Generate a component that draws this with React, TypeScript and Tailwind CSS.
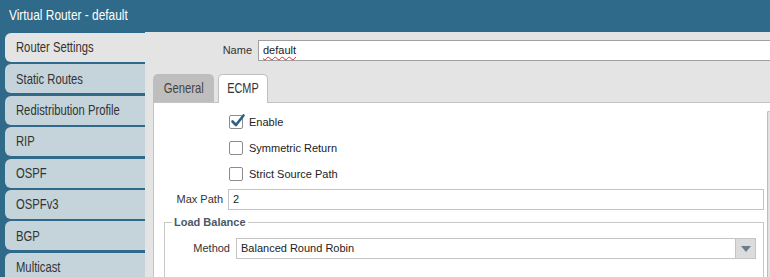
import React from "react";

const TEAL = "bg-[#2f6a8a]";

const sideTabs = [
  "Router Settings",
  "Static Routes",
  "Redistribution Profile",
  "RIP",
  "OSPF",
  "OSPFv3",
  "BGP",
  "Multicast",
];

const form = { fontFamily: '"Liberation Sans", Tahoma, Arial, sans-serif' };

// Arial Narrow is not installed, so the condensed UI font is squeezed
function Narrow({
  children,
  center,
  tight,
}: {
  children: React.ReactNode;
  center?: boolean;
  tight?: boolean;
}) {
  return (
    <span
      className={`inline-block whitespace-nowrap ${tight ? "scale-x-[0.75]" : "scale-x-[0.82]"} ${
        center ? "origin-center" : "origin-left"
      }`}
    >
      {children}
    </span>
  );
}

function Checkbox({ checked, label }: { checked?: boolean; label: string }) {
  return (
    <div className="flex items-center h-[26px] pl-[75px]">
      <div className="relative w-[14px] h-[14px] bg-white border border-[#8c8c8c] rounded-[2px] shrink-0">
        {checked && (
          <svg
            className="absolute -top-[3px] left-[0px]"
            width="16"
            height="16"
            viewBox="0 0 16 16"
          >
            <path
              d="M2.5 8.5 L6 12 L13.5 2.5"
              fill="none"
              stroke="#2e5f86"
              strokeWidth="2.6"
              strokeLinecap="round"
              strokeLinejoin="round"
            />
          </svg>
        )}
      </div>
      <span className="ml-[6px] text-[11px] text-[#222]">{label}</span>
    </div>
  );
}

export default function App() {
  return (
    <div className="w-[770px] h-[277px] overflow-hidden bg-[#e4e4e4] flex flex-col" style={form}>
      {/* Title bar */}
      <div className={`h-[32px] ${TEAL} flex items-center pl-[9px] shrink-0`}>
        <span className="text-white text-[14.5px]">
          <Narrow>Virtual Router - default</Narrow>
        </span>
      </div>

      <div className="flex flex-1 min-h-0">
        {/* Side tabs */}
        <div className={`w-[145px] ${TEAL} pl-[5px] pt-[1px] flex flex-col gap-[2.4px] shrink-0`}>
          {sideTabs.map((t, i) => (
            <div
              key={t}
              className={`h-[29px] shrink-0 flex items-center pl-[11px] rounded-l-[6px] text-[15px] text-[#333] overflow-hidden ${
                i === 0 ? "bg-[#e4e4e4]" : "bg-[#c4d4da]"
              }`}
            >
              <Narrow tight>{t}</Narrow>
            </div>
          ))}
        </div>

        {/* Main */}
        <div className="flex-1 min-w-0 flex flex-col">
          {/* Name row */}
          <div className="flex items-center mt-[8px] h-[21px]">
            <span className="w-[107px] text-right text-[11px] text-[#333]">Name</span>
            <div className="ml-[6px] flex-1 h-[21px] bg-white border-y border-l border-[#a0a0a0] flex items-center pl-[4px]">
              <span className="text-[11px] text-[#222] underline decoration-wavy decoration-[#e02424] decoration-1 underline-offset-[2px]">
                default
              </span>
            </div>
          </div>

          {/* Tabs */}
          <div className="flex items-start gap-[4px] pl-[8px] mt-[13px] h-[29px] -mb-px relative z-10">
            <div className="h-[28px] w-[61px] bg-[#bebebe] rounded-t-[5px] flex items-center justify-center text-[15px] text-[#444]">
              <Narrow center tight>General</Narrow>
            </div>
            <div className="h-[29px] w-[50px] bg-white border-x border-t border-[#c0c0c0] rounded-t-[5px] flex items-center justify-center text-[14.5px] text-[#333]">
              <Narrow center tight>ECMP</Narrow>
            </div>
          </div>

          {/* Panel */}
          <div className="flex-1 ml-[8px] bg-white border-t border-l border-[#c4c4c4] relative pt-[6px]">
            <Checkbox checked label="Enable" />
            <Checkbox label="Symmetric Return" />
            <Checkbox label="Strict Source Path" />

            <div className="flex items-center mt-[2px] h-[21px]">
              <span className="w-[69px] text-right text-[11px] text-[#333]">Max Path</span>
              <div className="ml-[5px] w-[536px] h-[21px] bg-white border border-[#c4c4c4] flex items-center pl-[4px] text-[11px] text-[#222]">
                2
              </div>
            </div>

            <fieldset className="mt-[6px] ml-[10px] w-[600px] border border-[#c8c8c8] px-[7px] pb-[20px]">
              <legend className="px-[2px] text-[11px] font-bold text-[#4a5868] leading-[13px]">
                Load Balance
              </legend>
              <div className="flex items-center mt-[9px] h-[21px]">
                <span className="w-[58px] text-right text-[11px] text-[#333]">Method</span>
                <div className="ml-[6px] flex-1 h-[21px] bg-white border border-[#c4c4c4] flex items-center pl-[4px] text-[11px] text-[#222]">
                  <span className="flex-1">Balanced Round Robin</span>
                  <div className="w-[20px] h-full bg-[#dcdcdc] border-l border-[#c4c4c4] flex items-center justify-center">
                    <svg width="10" height="6" viewBox="0 0 10 6">
                      <path d="M0 0 H10 L5 6 Z" fill="#6b7c8b" />
                    </svg>
                  </div>
                </div>
              </div>
            </fieldset>

            {/* Scrollbar edge */}
            <div className="absolute right-0 top-[8px] bottom-0 w-[3px] bg-[#e2e2e2] border-l border-t border-[#bdbdbd] rounded-tl-[2px]" />
          </div>
        </div>
      </div>
    </div>
  );
}
